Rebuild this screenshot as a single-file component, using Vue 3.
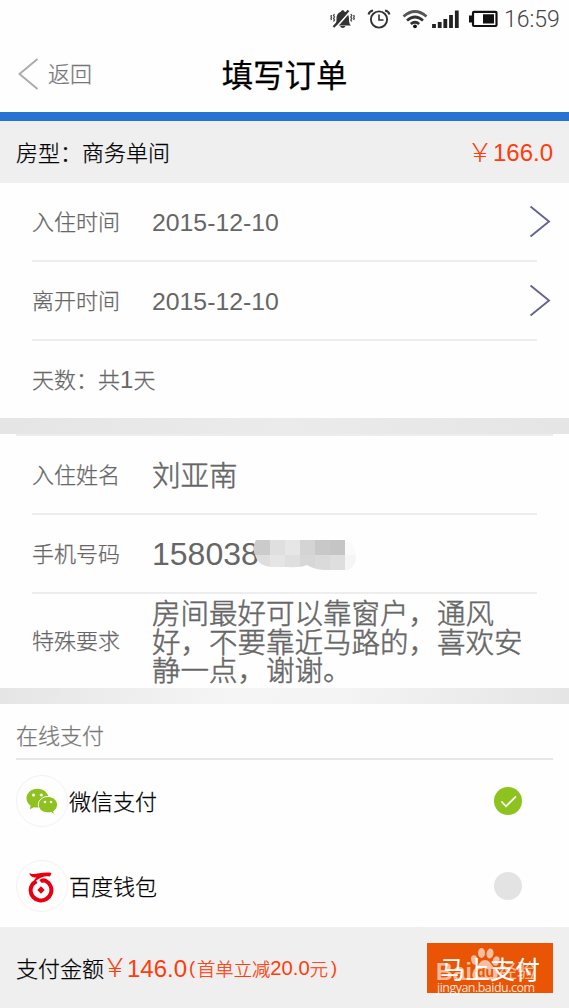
<template>
  <div class="page">
    <div class="status-bar">
      <svg class="s-mute" width="25" height="20" viewBox="0 0 25 20">
        <path d="M4.500 16.500c2-1.500 2-4 2-7C6.500 5.500 9 3.200 11 2.700c0-2 3.500-2 3.500 0 2 .5 4.500 2.800 4.500 6.800 0 3 0 5.500 2 7z" fill="#333" />
        <path d="M10 17h5.500c-1 2.500-4.500 2.500-5.500 0z" fill="#333" />
        <path d="M5 19.500L20.500 2" stroke="#fff" stroke-width="1.800" />
        <path d="M3.500 18L18.500 1.500" stroke="#333" stroke-width="2.200" />
        <path d="M4.500 5l-1 1.500 1 1.500-1 1.500 1 1.500-1 1.500M1.500 6l-.5 1.200.5 1.200-.5 1.200.5 1.400M20.800 5l1 1.500-1 1.500 1 1.500-1 1.500 1 1.500M23.700 6l.5 1.200-.5 1.200.5 1.200-.5 1.400" fill="none" stroke="#444" stroke-width="1.300" />
      </svg>
      <svg class="s-alarm" width="24" height="20" viewBox="0 0 24 20">
        <circle cx="12" cy="10.500" r="8.100" fill="none" stroke="#333" stroke-width="1.900" />
        <path d="M12 5.500v5.500h4.500" fill="none" stroke="#333" stroke-width="1.600" />
        <path d="M1.500 5.500Q2.500 2 6 1.500M18 1.500q3.500.5 4.500 4" fill="none" stroke="#333" stroke-width="2" />
      </svg>
      <svg class="s-wifi" width="26" height="20" viewBox="0 0 26 20">
        <g fill="none" stroke="#333" stroke-width="2.700">
          <path d="M1.500 7.500Q13-2.500 24.500 7.500" stroke="#555" />
          <path d="M5 11.500q8-7 16 0" />
          <path d="M8.800 15q4.200-3.500 8.400 0" />
        </g>
        <circle cx="13" cy="17.300" r="1.900" fill="#111" />
      </svg>
      <svg class="s-signal" width="27" height="20" viewBox="0 0 27 20">
        <path d="M2 15v4M7.700 13v6M13.300 10v9M19 6v13M24.800 1.500V19" stroke="#222" stroke-width="3.800" />
      </svg>
      <svg class="s-battery" width="29" height="18" viewBox="0 0 29 18">
        <rect x="4" y="1.800" width="23.500" height="14.200" rx="1" fill="none" stroke="#111" stroke-width="2.200" />
        <path d="M0 5.500h3v7H0zM14 4.300h11v9.200H14z" fill="#111" />
      </svg>
      <span class="clock">16:59</span>
    </div>

    <header class="nav">
      <div class="back">
        <svg width="21" height="32" viewBox="0 0 21 32">
          <path d="M19.500 1L1.500 16l18 15" fill="none" stroke="#aaa" stroke-width="1.900" />
        </svg>
        <span>返回</span>
      </div>
      <h1>填写订单</h1>
    </header>

    <div class="room">
      <span>房型：商务单间</span>
      <span class="price"><em>￥</em><b>166.0</b></span>
    </div>

    <section class="card">
      <div v-for="item in dates" :key="item.label" class="row">
        <span class="label">{{ item.label }}</span>
        <span class="date">{{ item.value }}</span>
        <svg class="arrow" width="22" height="33" viewBox="0 0 22 33">
          <path d="M1.500 1.500l18.500 15-18.500 15" fill="none" stroke="#65638f" stroke-width="1.900" />
        </svg>
      </div>
      <div class="row days">天数：共<b>1</b>天</div>
    </section>

    <div class="gap"></div>

    <section class="card guest">
      <div class="row">
        <span class="label">入住姓名</span>
        <span class="value">刘亚南</span>
      </div>
      <div class="row">
        <span class="label">手机号码</span>
        <span class="phone">158038
          <svg class="mask" width="104" height="31" viewBox="0 0 104 31">
            <defs>
              <clipPath id="blob">
                <path d="M3 0h89q11 4 11 16 0 10-8 14H70q-10-1-16-5-7 3-20 2H18Q5 26 2 15-1 7 3 0z" />
              </clipPath>
            </defs>
            <g clip-path="url(#blob)" shape-rendering="crispEdges">
              <rect
                v-for="(c, i) in mosaic"
                :key="i"
                :x="(i % 7) * 15 + 2 - (i % 7 ? 0 : 2)"
                :y="i < 7 ? 0 : 15"
                :width="i % 7 ? 15 : 17"
                :height="i < 7 ? 15 : 16"
                :fill="c"
              />
            </g>
          </svg>
        </span>
      </div>
      <div class="row remark">
        <span class="label">特殊要求</span>
        <span class="value">房间最好可以靠窗户，通风<br>好，不要靠近马路的，喜欢安<br>静一点，谢谢。</span>
      </div>
    </section>

    <div class="gap light"></div>

    <section class="pay">
      <div class="pay-title">在线支付</div>
      <div class="pay-item">
        <span class="logo">
          <svg width="32" height="27" viewBox="0 0 32 27">
            <path d="M11.500.8C5.300.8.500 5 .500 10.300c0 3.200 1.700 5.700 4.200 7.400l-1 3.600 4.200-2.100c1.200.3 2.300.4 3.600.4 6.200 0 11-4.200 11-9.400S17.700.8 11.500.8z" fill="#8dc21f" />
            <path d="M22 8.500c-5.500 0-9.700 3.700-9.700 8.200s4.200 8.200 9.700 8.200c1 0 2-.2 3-.4l3.500 2-.9-3.100c2.400-1.500 3.900-3.900 3.900-6.700 0-4.500-4.200-8.200-9.500-8.200z" fill="#8dc21f" stroke="#fff" />
            <g fill="#fff">
              <circle cx="7.500" cy="7" r="1.600" />
              <circle cx="15.300" cy="7" r="1.600" />
              <circle cx="19" cy="14" r="1.300" />
              <circle cx="25" cy="14" r="1.300" />
            </g>
          </svg>
        </span>
        <span class="pay-name">微信支付</span>
        <svg class="check" width="28" height="28" viewBox="0 0 28 28">
          <circle cx="14" cy="14" r="14" fill="#8dc21f" />
          <path d="M7.500 14.500l4.500 4.800 10-10" fill="none" stroke="#fff" stroke-width="1.800" />
        </svg>
      </div>
      <div class="pay-item">
        <span class="logo wallet">
          <svg width="26" height="31" viewBox="0 0 26 31">
            <path d="M1.300.9C3.500 2.500 7 2 11 1.300 15.500.5 20 .3 23.500 1l-1.500 3.500c-3-.6-5.500-.3-8 .8C9.500 7 7 9.500 5 12.500 5 9.500 6.500 7 8.500 5.200 5 6 2 4.500 1.300.9z" fill="#e60012" />
            <path d="M8.500 9.200C5 11 2.600 14.200 2.600 18.200a10.400 10.400 0 1 0 15.400-9.200Q15 7.500 12.500 9.500" fill="none" stroke="#e60012" stroke-width="4" />
            <path d="M13 14.300l3.700 3.700-3.700 3.700L9.300 18z" fill="#e60012" />
          </svg>
        </span>
        <span class="pay-name">百度钱包</span>
        <span class="uncheck"></span>
      </div>
    </section>

    <footer class="bottom">
      <span class="total">支付金额</span>
      <span class="price"><em>￥</em><b>146.0</b></span>
      <span class="discount"><i>(</i>首单立减<b>20.0</b>元<i class="end">)</i></span>
      <button class="submit">
        <svg class="watermark" width="126" height="56" viewBox="0 0 126 56">
          <g fill="#fff" fill-opacity=".62">
            <text x="9" y="37" font-size="24" font-weight="bold" textLength="36" lengthAdjust="spacingAndGlyphs">Bai</text>
            <ellipse cx="47.500" cy="17" rx="3.300" ry="4.800" transform="rotate(-15 47.500 17)" />
            <ellipse cx="54.500" cy="10" rx="3.500" ry="5" />
            <ellipse cx="63" cy="10.500" rx="3.500" ry="5" transform="rotate(8 63 10.500)" />
            <ellipse cx="69" cy="18" rx="3.300" ry="4.800" transform="rotate(20 69 18)" />
            <path d="M58 17c5 0 6 5 9.500 8 6 5 3 13-3 12-5-1-8-1-13 0-7 1-8-7-3-12 3.500-3 4.500-8 9.500-8z" />
            <text x="71" y="35" font-size="19" textLength="38">经验</text>
            <text x="10" y="49" font-size="12.500" textLength="98" fill-opacity=".85" class="site">jingyan.baidu.com</text>
          </g>
          <text x="50" y="34" font-size="15" font-weight="bold" textLength="17" lengthAdjust="spacingAndGlyphs" fill="#e95504">du</text>
        </svg>
        <span class="submit-text">马上支付</span>
      </button>
    </footer>
  </div>
</template>

<script setup>
import { ref } from 'vue';

const dates = ref([
  { label: '入住时间', value: '2015-12-10' },
  { label: '离开时间', value: '2015-12-10' },
]);

// 手机号后几位的马赛克色块
const mosaic = [
  '#cbcbcb', '#dfdfdf', '#e6e6e6', '#d4d4d4', '#c8c8c8', '#c5c5c5', '#fafafa',
  '#dedede', '#e5e5e5', '#dfdfdf', '#d7d7d7', '#dadada', '#dedede', '#f5f5f5',
];
</script>

<style>
body {
  background: #fefefe;
}
</style>

<style scoped>
.page {
  width: 569px;
  height: 1008px;
  overflow: hidden;
  background: #fefefe;
  color: #000;
  font-family: "Liberation Sans", "Noto Sans CJK SC", sans-serif;
  font-size: 22px;
  font-weight: 300;
  -webkit-text-stroke: 0.25px;
}
b, i, em {
  font-weight: normal;
  font-style: normal;
  -webkit-text-stroke: 0;
}
.status-bar {
  display: flex;
  align-items: center;
  justify-content: flex-end;
  height: 38px;
  padding-right: 9px;
}
.s-alarm {
  margin-left: 12px;
}
.s-wifi {
  margin-left: 11px;
}
.s-signal {
  margin-left: 4px;
}
.s-battery {
  margin-left: 10px;
}
.clock {
  width: 56px;
  margin-left: 6px;
  font-family: Roboto, sans-serif;
  font-size: 23px;
  color: #444;
  white-space: nowrap;
  -webkit-text-stroke: 0;
}
.nav {
  position: relative;
  box-sizing: border-box;
  height: 83px;
  border-bottom: 9px solid #2673d2;
  display: flex;
  justify-content: center;
}
.back {
  position: absolute;
  left: 18px;
  top: 20px;
  display: flex;
  align-items: center;
  gap: 9px;
  height: 32px;
  color: #777;
}
.back span {
  padding-bottom: 4px;
}
h1 {
  margin: 0;
  font-size: 31.4px;
  font-weight: 400;
  line-height: 77px;
}
.room {
  display: flex;
  justify-content: space-between;
  height: 62px;
  padding: 0 16px;
  line-height: 65px;
  background: #efefef;
}
.room .price {
  line-height: 63px;
}
.price {
  display: flex;
  color: #ff3c0c;
  font-family: "Noto Sans CJK SC", sans-serif;
}
.price em {
  width: 22px;
  margin-right: 2px;
  margin-left: -2px;
  font-size: 26px;
  font-weight: 300;
  text-indent: -2px;
}
.room .price em {
  line-height: 60px;
}
.price b {
  font-family: "Liberation Sans", sans-serif;
  font-size: 24px;
}
.card {
  color: #666;
}
.row {
  display: flex;
  align-items: center;
  box-sizing: border-box;
  height: 79px;
  margin: 0 32px;
  border-bottom: 2px solid #ededed;
}
.label {
  flex: none;
  width: 120px;
  padding-bottom: 4px;
}
.date {
  font-size: 24.800px;
  padding-top: 2px;
  -webkit-text-stroke: 0;
}
.arrow {
  margin-left: auto;
  margin-right: -14px;
}
.days {
  height: 77px;
  padding-bottom: 3px;
  border-bottom: none;
}
.days b {
  font-size: 24px;
  padding-top: 3px;
}
.gap {
  height: 16px;
  background: linear-gradient(100deg, #e5e5e5, #ebebeb 50%, #e5e5e5);
}
.gap.light {
  background: linear-gradient(100deg, #e5e5e5, #f5f5f5 40%, #f4f4f4 60%, #e5e5e5);
}
.guest::before {
  content: "";
  display: block;
  height: 2px;
  margin: 0 16px;
  background: #ededed;
}
.value {
  padding-top: 4px;
  font-size: 28.500px;
  line-height: 28.500px;
  white-space: nowrap;
  -webkit-text-stroke: 0.5px;
}
.phone {
  position: relative;
  padding-top: 2px;
  font-size: 32px;
  -webkit-text-stroke: 0;
}
.mask {
  position: absolute;
  left: 101px;
  top: 6px;
}
.remark {
  height: 94px;
  border-bottom: none;
}
.pay {
  height: 223px;
}
.pay-title {
  box-sizing: border-box;
  height: 56px;
  margin: 0 16px;
  line-height: 65px;
  color: #777;
  border-bottom: 2px solid #e6e6e6;
}
.pay-item {
  display: flex;
  align-items: center;
  height: 85px;
  padding: 0 47px 0 16px;
}
.pay-title + .pay-item {
  height: 82px;
}
.pay-title + .pay-item + .pay-item {
  height: 88px;
}
.logo {
  display: flex;
  align-items: center;
  justify-content: center;
  box-sizing: border-box;
  width: 52px;
  height: 52px;
  border: 1px solid #f2f2f2;
  border-radius: 50%;
}
.wallet {
  padding: 2px 2px 0 0;
}
.pay-name {
  margin-left: 1px;
  padding-bottom: 3px;
}
.check, .uncheck {
  margin-left: auto;
}
.uncheck {
  width: 28px;
  height: 28px;
  border-radius: 50%;
  background: #e3e3e3;
}
.bottom {
  display: flex;
  align-items: center;
  height: 81px;
  padding: 0 16px;
  background: #efefef;
}
.total {
  padding-bottom: 2px;
}
.bottom .price {
  line-height: 32px;
}
.bottom .price em {
  margin-left: 0;
  margin-right: 1px;
  line-height: 29px;
}
.bottom .price b {
  padding-top: 2px;
}
.discount {
  display: flex;
  align-items: center;
  font-size: 18.300px;
  color: #ff3c0c;
  margin-left: 2px;
}
.discount i {
  width: 8px;
}
.discount .end {
  margin-left: 3px;
}
.discount b {
  font-size: 20.300px;
  padding-top: 2px;
}
.submit {
  position: relative;
  width: 126px;
  height: 50px;
  margin-left: auto;
  padding: 0;
  border: none;
  background: #e95504;
  color: #fff;
  font: 400 25px "Noto Sans CJK SC", sans-serif;
  -webkit-text-stroke: 0;
}
.submit-text {
  position: relative;
}
.watermark {
  position: absolute;
  left: 0;
  top: 0;
}
.watermark text {
  font-family: "Liberation Sans", "Noto Sans CJK SC", sans-serif;
}
.watermark .site {
  font-family: "Open Sans", sans-serif;
}
</style>
